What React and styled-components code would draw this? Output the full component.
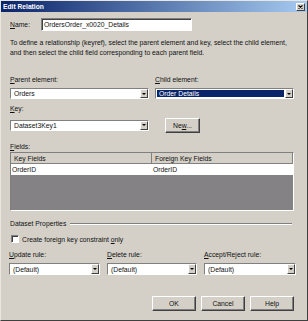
import React from "react";
import styled, { createGlobalStyle } from "styled-components";

const GlobalStyle = createGlobalStyle`
  html, body {
    margin: 0;
    padding: 0;
    background: #d4d0c8;
  }
  * {
    box-sizing: border-box;
  }
`;

const Window = styled.div`
  width: 308px;
  height: 321px;
  background: #d4d0c8;
  border: 1px solid;
  border-color: #e8e6e0 #404040 #404040 #e8e6e0;
  font-family: "Liberation Sans", Arial, sans-serif;
  font-size: 6.8px;
  color: #111;
  display: flex;
  flex-direction: column;
  overflow: hidden;
`;

const TitleBar = styled.div`
  height: 11px;
  background: linear-gradient(to right, #0a246a, #a6caf0);
  display: flex;
  align-items: center;
  justify-content: space-between;
  padding: 0 2px 0 2px;
`;

const Title = styled.span`
  color: #fff;
  font-weight: bold;
  font-size: 6.7px;
`;

const CloseButton = styled.div`
  width: 9px;
  height: 8px;
  background: #d4d0c8;
  border: 1px solid;
  border-color: #fff #404040 #404040 #fff;
  display: flex;
  align-items: center;
  justify-content: center;
`;

const Body = styled.div`
  flex: 1;
  padding: 6px 13px 0 9px;
  display: flex;
  flex-direction: column;
`;

const NameRow = styled.div`
  display: flex;
  align-items: center;
  height: 13px;
`;

const NameLabel = styled.span`
  width: 31px;
`;

const TextBox = styled.div`
  width: 151px;
  height: 13px;
  background: #fff;
  border: 1px solid;
  border-color: #808080 #fff #fff #808080;
  box-shadow: inset 1px 1px 0 #404040;
  display: flex;
  align-items: center;
  padding-left: 2px;
`;

const Description = styled.p`
  margin: 7px 0 0 0;
  line-height: 10px;
  white-space: nowrap;
`;

const Label = styled.div`
  line-height: 10px;
  margin-top: ${(p) => p.$top || 0}px;
`;

const TwoCols = styled.div`
  display: grid;
  grid-template-columns: 139px 139px;
  column-gap: 6px;
  margin-top: ${(p) => p.$top || 0}px;
`;

const Field = styled.div`
  display: flex;
  flex-direction: column;
  gap: 3px;
`;

const SelectBox = styled.div`
  height: ${(p) => p.$h || 11}px;
  background: #fff;
  border: 1px solid;
  border-color: #808080 #fff #fff #808080;
  display: flex;
  align-items: stretch;
`;

const SelectValue = styled.div`
  flex: 1;
  display: flex;
  align-items: center;
  padding-left: 2px;
  margin: 1px;
  background: ${(p) => (p.$selected ? "#0a246a" : "transparent")};
  color: ${(p) => (p.$selected ? "#fff" : "inherit")};
`;

const DropButton = styled.div`
  width: 8px;
  background: #d4d0c8;
  border: 1px solid;
  border-color: #fff #404040 #404040 #fff;
  display: flex;
  align-items: center;
  justify-content: center;
`;

const Arrow = styled.div`
  width: 0;
  height: 0;
  border-left: 2px solid transparent;
  border-right: 2px solid transparent;
  border-top: 2px solid #000;
`;

const KeyRow = styled.div`
  display: flex;
  align-items: center;
  gap: 16px;
  margin-top: 3px;
  height: 16px;
`;

const KeySlot = styled.div`
  width: 139px;
`;

const Button = styled.div`
  width: ${(p) => p.$w || 44}px;
  height: 15px;
  background: #d4d0c8;
  border: 1px solid;
  border-color: #fff #404040 #404040 #fff;
  box-shadow: inset -1px -1px 0 #808080;
  display: flex;
  align-items: center;
  justify-content: center;
`;

const Grid = styled.div`
  height: 59px;
  border: 1px solid;
  border-color: #808080 #fff #fff #808080;
  background: #848284;
  display: flex;
  flex-direction: column;
`;

const GridRow = styled.div`
  display: grid;
  grid-template-columns: 141px 1fr;
  height: 11px;
  background: ${(p) => (p.$header ? "#d4d0c8" : "#fff")};
  border-bottom: ${(p) => (p.$header ? "1px solid #808080" : "none")};
`;

const Cell = styled.div`
  display: flex;
  align-items: center;
  padding-left: ${(p) => (p.$header ? 3 : 1)}px;
  border-right: ${(p) => (p.$header ? "1px solid #808080" : "none")};
`;

const GroupHeader = styled.div`
  display: flex;
  align-items: center;
  gap: 4px;
  margin-top: 8px;
  line-height: 10px;
  padding-right: 2px;
`;

const GroupLine = styled.div`
  flex: 1;
  height: 2px;
  border-top: 1px solid #808080;
  border-bottom: 1px solid #fff;
`;

const CheckRow = styled.div`
  display: flex;
  align-items: center;
  gap: 3px;
  margin-top: 5px;
  padding-left: 1px;
  height: 10px;
`;

const CheckBox = styled.div`
  width: 8px;
  height: 8px;
  background: #fff;
  border: 1px solid;
  border-color: #808080 #fff #fff #808080;
  box-shadow: inset 1px 1px 0 #404040;
`;

const ThreeCols = styled.div`
  display: grid;
  grid-template-columns: 91px 90px 92px;
  column-gap: 7px;
  margin-top: 6px;
  margin-left: -1px;
`;

const ButtonRow = styled.div`
  display: flex;
  justify-content: flex-end;
  gap: 5px;
  margin-top: 21px;
`;

function Select({ value, selected, h }) {
  return (
    <SelectBox $h={h}>
      <SelectValue $selected={selected}>{value}</SelectValue>
      <DropButton>
        <Arrow />
      </DropButton>
    </SelectBox>
  );
}

export default function App() {
  return (
    <>
      <GlobalStyle />
      <Window>
        <TitleBar>
          <Title>Edit Relation</Title>
          <CloseButton>
            <svg width="5" height="4" viewBox="0 0 5 4">
              <path d="M0.5 0.5 L4.5 3.5 M4.5 0.5 L0.5 3.5" stroke="#000" strokeWidth="1.1" />
            </svg>
          </CloseButton>
        </TitleBar>
        <Body>
          <NameRow>
            <NameLabel>
              <u>N</u>ame:
            </NameLabel>
            <TextBox>OrdersOrder_x0020_Details</TextBox>
          </NameRow>
          <Description>
            To define a relationship (keyref), select the parent element and key, select the child element,
            <br />
            and then select the child field corresponding to each parent field.
          </Description>

          <TwoCols $top={17}>
            <Field>
              <Label>
                <u>P</u>arent element:
              </Label>
              <Select value="Orders" />
            </Field>
            <Field>
              <Label>
                <u>C</u>hild element:
              </Label>
              <Select value="Order Details" selected />
            </Field>
          </TwoCols>

          <Label $top={5}>
            <u>K</u>ey:
          </Label>
          <KeyRow>
            <KeySlot>
              <Select value="Dataset3Key1" />
            </KeySlot>
            <Button $w={35}>
              <span>
                Ne<u>w</u>...
              </span>
            </Button>
          </KeyRow>

          <Label $top={9}>
            <u>F</u>ields:
          </Label>
          <Grid>
            <GridRow $header>
              <Cell $header>Key Fields</Cell>
              <Cell $header>Foreign Key Fields</Cell>
            </GridRow>
            <GridRow>
              <Cell>OrderID</Cell>
              <Cell>OrderID</Cell>
            </GridRow>
          </Grid>

          <GroupHeader>
            <span>Dataset Properties</span>
            <GroupLine />
          </GroupHeader>
          <CheckRow>
            <CheckBox />
            <span>
              Create foreign key constraint <u>o</u>nly
            </span>
          </CheckRow>

          <ThreeCols>
            <Field>
              <Label>
                <u>U</u>pdate rule:
              </Label>
              <Select value="(Default)" h={12} />
            </Field>
            <Field>
              <Label>
                <u>D</u>elete rule:
              </Label>
              <Select value="(Default)" h={12} />
            </Field>
            <Field>
              <Label>
                <u>A</u>ccept/Reject rule:
              </Label>
              <Select value="(Default)" h={12} />
            </Field>
          </ThreeCols>

          <ButtonRow>
            <Button $w={44}>OK</Button>
            <Button $w={44}>Cancel</Button>
            <Button $w={44}>Help</Button>
          </ButtonRow>
        </Body>
      </Window>
    </>
  );
}
